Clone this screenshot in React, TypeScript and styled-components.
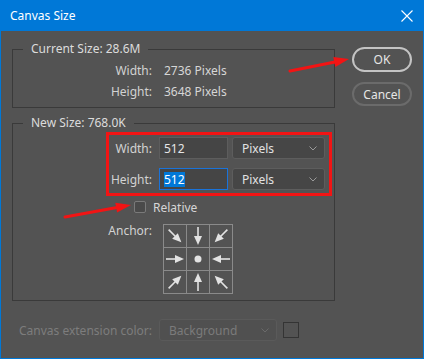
import React from "react";
import styled, { createGlobalStyle } from "styled-components";

const GlobalStyle = createGlobalStyle`
  html, body {
    margin: 0;
    padding: 0;
    background: #535353;
  }
  body {
    font-family: "Segoe UI", "Noto Sans", "Open Sans", sans-serif;
  }
`;

const Window = styled.div`
  position: relative;
  width: 424px;
  height: 359px;
  box-sizing: border-box;
  border: 1px solid #0078d7;
  border-top: none;
  background: #535353;
  display: flex;
  flex-direction: column;
  font-size: 12px;
  color: #d6d6d6;
`;

const TitleBar = styled.div`
  height: 31px;
  flex-shrink: 0;
  background: #0078d7;
  display: flex;
  align-items: center;
  justify-content: space-between;
  padding: 0 10px 0 9px;
  color: #ffffff;
  font-size: 12px;
`;

const Body = styled.div`
  display: flex;
  gap: 17px;
  padding: 10px 11px 0 11px;
`;

const LeftColumn = styled.div`
  width: 323px;
  display: flex;
  flex-direction: column;
`;

const RightColumn = styled.div`
  width: 60px;
  display: flex;
  flex-direction: column;
  gap: 10px;
  padding-top: 6px;
`;

const Group = styled.fieldset<{ $gapTop?: number }>`
  margin: ${(p) => p.$gapTop ?? 0}px 0 0 0;
  border: 1px solid #3a3a3a;
  padding: 0 2px ${(p) => (p.$gapTop ? 6 : 7)}px 10px;
  min-width: 0;
`;

const Legend = styled.legend`
  padding: 0 8px;
  line-height: 16px;
  color: #dcdcdc;
`;

const InfoGrid = styled.div`
  display: grid;
  grid-template-columns: 129px auto;
  column-gap: 12px;
  row-gap: 5px;
  line-height: 16px;
  margin-top: 6px;
`;

const Label = styled.span<{ $muted?: boolean }>`
  text-align: right;
  color: ${(p) => (p.$muted ? "#7d7d7d" : "#d2d2d2")};
  white-space: nowrap;
`;

const Value = styled.span`
  color: #d6d6d6;
`;

const Highlight = styled.div`
  margin: 1px 0 0 83px;
  width: fit-content;
  border: 3px solid #f21414;
  padding: 2px 4px 3px 0;
  display: grid;
  grid-template-columns: 46px 69px 93px;
  column-gap: 4px;
  row-gap: 9px;
  align-items: center;
`;

const FormLabel = styled.span`
  text-align: right;
  padding-right: 3px;
  color: #d2d2d2;
  white-space: nowrap;
`;

const Field = styled.div<{ $focused?: boolean }>`
  height: 22px;
  box-sizing: border-box;
  border: 1px solid ${(p) => (p.$focused ? "#1a73d9" : "#5d5d5d")};
  background: #454545;
  padding-left: 4px;
  display: flex;
  align-items: center;
  color: #e6e6e6;
`;

const Selected = styled.span`
  background: #0078d7;
  color: #ffffff;
  line-height: 15px;
`;

const Select = styled.div<{ $disabled?: boolean }>`
  height: 22px;
  box-sizing: border-box;
  border: 1px solid ${(p) => (p.$disabled ? "#5a5a5a" : "#5d5d5d")};
  border-radius: 3px;
  background: ${(p) => (p.$disabled ? "#505050" : "#464646")};
  padding: 0 7px 0 9px;
  display: flex;
  align-items: center;
  justify-content: space-between;
  color: ${(p) => (p.$disabled ? "#7b7b7b" : "#e2e2e2")};
`;

const CheckRow = styled.div`
  display: flex;
  align-items: center;
  gap: 7px;
  height: 16px;
  margin: 3px 0 0 111px;
  color: #d6d6d6;
`;

const CheckBox = styled.span`
  width: 12px;
  height: 12px;
  box-sizing: border-box;
  border: 1px solid #7a7a7a;
  border-radius: 2px;
  background: #4a4a4a;
`;

const AnchorRow = styled.div`
  display: grid;
  grid-template-columns: 129px 70px;
  column-gap: 11px;
  margin-top: 9px;
  line-height: 16px;
`;

const AnchorLabel = styled(Label)`
  margin-top: -1px;
`;

const AnchorGrid = styled.div`
  display: grid;
  grid-template-columns: repeat(3, 22px);
  grid-template-rows: repeat(3, 22px);
  gap: 1px;
  border: 1px solid #8a8a8a;
  background: #8a8a8a;
`;

const AnchorCell = styled.div`
  background: #535353;
  display: flex;
  align-items: center;
  justify-content: center;
`;

const ExtensionRow = styled.div`
  display: grid;
  grid-template-columns: 140px 118px 16px;
  column-gap: 7px;
  align-items: center;
  margin-top: 18px;
`;

const Swatch = styled.span`
  width: 16px;
  height: 16px;
  box-sizing: border-box;
  border: 1px solid #343434;
  margin-left: -1px;
`;

const Button = styled.div<{ $primary?: boolean }>`
  height: ${(p) => (p.$primary ? 25 : 24)}px;
  box-sizing: border-box;
  border: ${(p) => (p.$primary ? "2px solid #c4c4c4" : "2px solid #6b6b6b")};
  border-radius: 13px;
  display: flex;
  align-items: center;
  justify-content: center;
  color: #e6e6e6;
  font-size: 12px;
`;

const Annotations = styled.svg`
  position: absolute;
  top: 0;
  left: -1px;
  pointer-events: none;
`;

const Chevron = ({ color }: { color: string }) => (
  <svg width="8" height="5" viewBox="0 0 8 5">
    <polyline points="0.5,0.5 4,4 7.5,0.5" fill="none" stroke={color} strokeWidth="1" />
  </svg>
);

const rotations = [-45, 0, 45, -90, null, 90, -135, 180, 135];

const AnchorArrow = ({ angle }: { angle: number | null }) => (
  <svg width="22" height="22" viewBox="0 0 22 22">
    {angle === null ? (
      <circle cx="11" cy="11" r="3.5" fill="#e2e2e2" />
    ) : (
      <g transform={`rotate(${angle} 11 11)`}>
        <line x1="11" y1="2" x2="11" y2="12" stroke="#e2e2e2" strokeWidth="1.6" />
        <polygon points="7,11 15,11 11,20" fill="#e2e2e2" />
      </g>
    )}
  </svg>
);

const App = () => {
  return (
    <>
      <GlobalStyle />
      <Window>
        <TitleBar>
          <span>Canvas Size</span>
          <svg width="12" height="12" viewBox="0 0 12 12">
            <path d="M0.5 0.5 L11.5 11.5 M11.5 0.5 L0.5 11.5" stroke="#ffffff" strokeWidth="1.1" />
          </svg>
        </TitleBar>
        <Body>
          <LeftColumn>
            <Group>
              <Legend>Current Size: 28.6M</Legend>
              <InfoGrid>
                <Label>Width:</Label>
                <Value>2736 Pixels</Value>
                <Label>Height:</Label>
                <Value>3648 Pixels</Value>
              </InfoGrid>
            </Group>
            <Group $gapTop={7}>
              <Legend>New Size: 768.0K</Legend>
              <Highlight>
                <FormLabel>Width:</FormLabel>
                <Field>512</Field>
                <Select>
                  Pixels
                  <Chevron color="#9a9a9a" />
                </Select>
                <FormLabel>Height:</FormLabel>
                <Field $focused>
                  <Selected>512</Selected>
                </Field>
                <Select>
                  Pixels
                  <Chevron color="#9a9a9a" />
                </Select>
              </Highlight>
              <CheckRow>
                <CheckBox />
                <span>Relative</span>
              </CheckRow>
              <AnchorRow>
                <AnchorLabel>Anchor:</AnchorLabel>
                <AnchorGrid>
                  {rotations.map((r, i) => (
                    <AnchorCell key={i}>
                      <AnchorArrow angle={r} />
                    </AnchorCell>
                  ))}
                </AnchorGrid>
              </AnchorRow>
            </Group>
            <ExtensionRow>
              <Label $muted>Canvas extension color:</Label>
              <Select $disabled>
                Background
                <Chevron color="#6a6a6a" />
              </Select>
              <Swatch />
            </ExtensionRow>
          </LeftColumn>
          <RightColumn>
            <Button $primary>OK</Button>
            <Button>Cancel</Button>
          </RightColumn>
        </Body>
        <Annotations width="424" height="359" viewBox="0 0 424 359">
          <line x1="290" y1="71" x2="335" y2="62" stroke="#f21414" strokeWidth="3" strokeLinecap="round" />
          <polygon points="349,59 335.3,66.9 333.3,57.1" fill="#f21414" />
          <line x1="65" y1="217" x2="117" y2="207.6" stroke="#f21414" strokeWidth="3" strokeLinecap="round" />
          <polygon points="131,205 117.1,212.6 115.3,202.8" fill="#f21414" />
        </Annotations>
      </Window>
    </>
  );
};

export default App;
